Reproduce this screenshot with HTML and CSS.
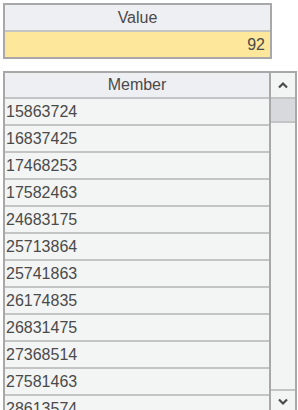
FILE: index.html
```html
<!DOCTYPE html>
<html lang="en">
<head>
  <meta charset="UTF-8" />
  <title>Value / Member</title>
  <link rel="stylesheet" href="styles.css">
</head>
<body>

  <div class="value-box">
    <div class="head">Value</div>
    <div class="value">92</div>
  </div>

  <div class="member-box">
    <div class="list">
      <div class="head">Member</div>
      <div class="row">15863724</div>
      <div class="row">16837425</div>
      <div class="row">17468253</div>
      <div class="row">17582463</div>
      <div class="row">24683175</div>
      <div class="row">25713864</div>
      <div class="row">25741863</div>
      <div class="row">26174835</div>
      <div class="row">26831475</div>
      <div class="row">27368514</div>
      <div class="row">27581463</div>
      <div class="row">28613574</div>
      <div class="row">28731645</div>
    </div>
    <div class="scrollbar">
      <div class="btn up">
        <svg width="12" height="8" viewBox="0 0 12 8"><path d="M2 6.5 L6 2.5 L10 6.5" fill="none" stroke="#4a4a4a" stroke-width="2.2"/></svg>
      </div>
      <div class="thumb"></div>
      <div class="track"></div>
      <div class="btn down">
        <svg width="12" height="8" viewBox="0 0 12 8"><path d="M2 1.5 L6 5.5 L10 1.5" fill="none" stroke="#4a4a4a" stroke-width="2.2"/></svg>
      </div>
    </div>
  </div>

</body>
</html>
```

FILE: styles.css
```css
body {
  margin: 0;
  padding: 3px 1px 0 3px;
  height: 410px;
  box-sizing: border-box;
  overflow: hidden;
  background-color: #fff;
  font-family: "Liberation Sans", Arial, sans-serif;
  font-size: 16px;
  color: #4a4a4a;
}

.value-box {
  width: 269px;
  border: 2px solid #a8a8a8;
  box-sizing: border-box;
}

.value-box .head {
  height: 25px;
  line-height: 25px;
  text-align: center;
  background-color: #eeeff2;
  border-bottom: 2px solid #c4c4c4;
}

.value-box .value {
  height: 25px;
  line-height: 25px;
  text-align: right;
  padding-right: 5px;
  background-color: #fde79a;
}

.member-box {
  display: flex;
  margin-top: 12px;
  height: 340px;
  border: 2px solid #a8a8a8;
  border-bottom: none;
  overflow: hidden;
}

.list {
  flex: 1;
  background-color: #f3f4f4;
}

.list .head {
  height: 24px;
  line-height: 24px;
  text-align: center;
  background-color: #eeeff2;
  border-bottom: 2px solid #c4c4c4;
}

.row {
  height: 25px;
  line-height: 25px;
  padding-left: 1px;
  border-bottom: 2px solid #c4c4c4;
}

.scrollbar {
  width: 24px;
  display: flex;
  flex-direction: column;
  border-left: 2px solid #a8a8a8;
  background-color: #f3f4f4;
}

.scrollbar .btn {
  height: 24px;
  display: flex;
  align-items: center;
  justify-content: center;
}

.scrollbar .up {
  border-bottom: 2px solid #c4c4c4;
}

.scrollbar .down {
  border-top: 2px solid #c4c4c4;
  height: 22px;
}

.scrollbar .thumb {
  height: 22px;
  background-color: #d8d9dd;
  border-bottom: 2px solid #c4c4c4;
}

.scrollbar .track {
  flex: 1;
}
```
